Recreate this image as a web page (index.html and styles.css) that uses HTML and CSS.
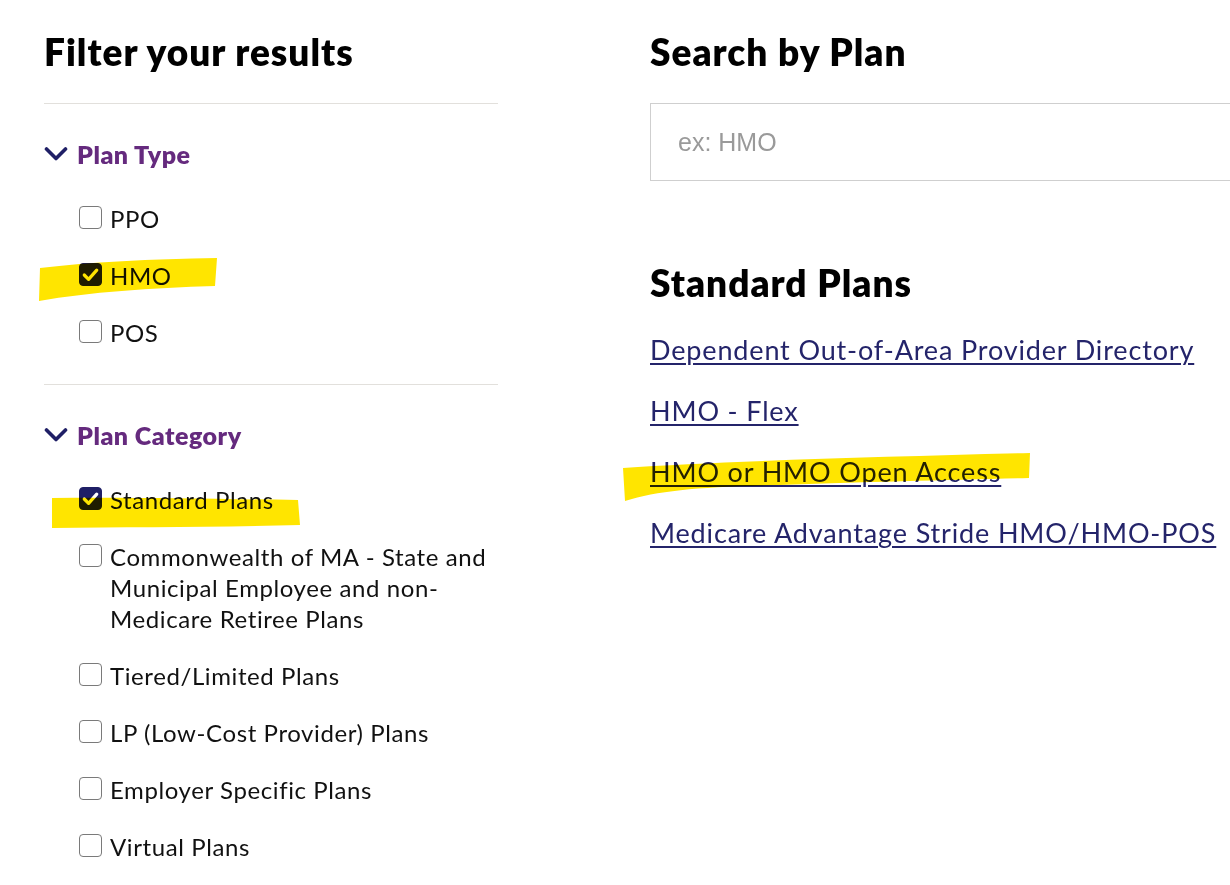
FILE: index.html
```html
<!DOCTYPE html>
<html lang="en">
<head>
<meta charset="utf-8">
<title>Filter your results</title>
<link rel="stylesheet" href="styles.css">
</head>
<body>
<div class="page">
  <aside class="filters">
    <h2 class="title">Filter your results</h2>
    <section class="group">
      <h3 class="group-head">
        <svg class="chev" viewBox="0 0 24 16" width="24" height="16"><path d="M2.5 3 L12 12.5 L21.5 3" fill="none" stroke="#1f1f66" stroke-width="3.6" stroke-linecap="round" stroke-linejoin="round"/></svg>
        <span>Plan Type</span>
      </h3>
      <ul class="opts">
        <li class="opt"><span class="box"></span><span class="lbl">PPO</span></li>
        <li class="opt"><span class="box on"><svg viewBox="0 0 24 24" width="23" height="23"><path d="M5.5 12.5 L10 17 L18.5 7.5" fill="none" stroke="#fff" stroke-width="3.4" stroke-linecap="round" stroke-linejoin="round"/></svg></span><span class="lbl">HMO</span></li>
        <li class="opt"><span class="box"></span><span class="lbl">POS</span></li>
      </ul>
    </section>
    <section class="group">
      <h3 class="group-head">
        <svg class="chev" viewBox="0 0 24 16" width="24" height="16"><path d="M2.5 3 L12 12.5 L21.5 3" fill="none" stroke="#1f1f66" stroke-width="3.6" stroke-linecap="round" stroke-linejoin="round"/></svg>
        <span>Plan Category</span>
      </h3>
      <ul class="opts">
        <li class="opt"><span class="box on"><svg viewBox="0 0 24 24" width="23" height="23"><path d="M5.5 12.5 L10 17 L18.5 7.5" fill="none" stroke="#fff" stroke-width="3.4" stroke-linecap="round" stroke-linejoin="round"/></svg></span><span class="lbl">Standard Plans</span></li>
        <li class="opt"><span class="box"></span><span class="lbl">Commonwealth of MA - State and Municipal Employee and non-Medicare Retiree Plans</span></li>
        <li class="opt"><span class="box"></span><span class="lbl">Tiered/Limited Plans</span></li>
        <li class="opt"><span class="box"></span><span class="lbl">LP (Low-Cost Provider) Plans</span></li>
        <li class="opt"><span class="box"></span><span class="lbl">Employer Specific Plans</span></li>
        <li class="opt"><span class="box"></span><span class="lbl">Virtual Plans</span></li>
      </ul>
    </section>
  </aside>
  <main class="results">
    <h2 class="title">Search by Plan</h2>
    <div class="search"><span class="placeholder">ex: HMO</span></div>
    <h2 class="title sub">Standard Plans</h2>
    <ul class="links">
      <li><a href="#">Dependent Out-of-Area Provider Directory</a></li>
      <li><a href="#">HMO - Flex</a></li>
      <li><a href="#">HMO or HMO Open Access</a></li>
      <li><a href="#">Medicare Advantage Stride HMO/HMO-POS</a></li>
    </ul>
  </main>
</div>
<svg class="marks" width="1230" height="885" viewBox="0 0 1230 885">
  <path d="M40 268 C90 262 150 259 217 258 L215 286 C150 288 90 292 39 301 Z" fill="#ffe500"/>
  <path d="M52 498 C130 497 220 499 298 500 L300 525 C220 527 130 527 52 528 Z" fill="#ffe500"/>
  <path d="M623 468 C720 461 880 457 1030 453 L1029 478 C960 480 860 482 780 485 C700 487 660 490 625 501 Z" fill="#ffe500"/>
</svg>
</body>
</html>
```

FILE: styles.css
```css
html, body {
  margin: 0;
  padding: 0;
  background: #fff;
}
body {
  width: 1230px;
  height: 885px;
  overflow: hidden;
  position: relative;
  font-family: Lato, "Noto Sans", sans-serif;
  color: #111;
}
.page {
  display: grid;
  grid-template-columns: 454px 640px;
  column-gap: 152px;
  padding-left: 44px;
}
.title {
  margin: 0;
  padding-top: 32px;
  font-size: 37px;
  line-height: 40px;
  font-weight: 800;
  letter-spacing: 1px;
  color: #000;
  white-space: nowrap;
}
.filters .title {
  padding-bottom: 31px;
  border-bottom: 1px solid #e2e0dc;
}
.group {
  padding-top: 35px;
  padding-bottom: 36px;
  border-bottom: 1px solid #e2e0dc;
}
.group:last-child {
  border-bottom: none;
}
.group-head {
  margin: 0;
  display: flex;
  align-items: center;
  gap: 9px;
  font-size: 25px;
  line-height: 30px;
  font-weight: 800;
  letter-spacing: 0.5px;
  color: #652a7e;
}
.chev {
  display: block;
  flex: none;
}
.opts {
  list-style: none;
  margin: 34px 0 0;
  padding: 0 0 0 35px;
  display: flex;
  flex-direction: column;
  gap: 26px;
}
.opt {
  display: flex;
  align-items: flex-start;
  gap: 8px;
  font-size: 24px;
  line-height: 31px;
  letter-spacing: 0.6px;
  color: #111;
}
.box {
  flex: none;
  width: 23px;
  height: 23px;
  margin-top: 3px;
  box-sizing: border-box;
  border: 1px solid #7a7a7a;
  border-radius: 4px;
  background: #fff;
  position: relative;
}
.box.on {
  background: #1f1f66;
  border-color: #1f1f66;
}
.box svg {
  position: absolute;
  left: -1px;
  top: -1px;
}
.lbl {
  max-width: 390px;
}
.search {
  margin-top: 31px;
  height: 78px;
  box-sizing: border-box;
  border: 1px solid #cfcfcf;
  display: flex;
  align-items: center;
  padding-left: 27px;
}
.placeholder {
  font-family: "Liberation Sans", Arial, sans-serif;
  font-size: 25px;
  color: #9a9a9a;
}
.title.sub {
  padding-top: 82px;
}
.links {
  list-style: none;
  margin: 31px 0 0;
  padding: 0;
  display: flex;
  flex-direction: column;
  gap: 30px;
}
.links li {
  font-size: 27px;
  line-height: 31px;
  letter-spacing: 0.85px;
  white-space: nowrap;
}
.links a {
  color: #24246a;
  text-decoration: underline;
  text-underline-offset: 3px;
  text-decoration-thickness: 2px;
}
.marks {
  position: absolute;
  left: 0;
  top: 0;
  pointer-events: none;
  mix-blend-mode: multiply;
}
```
